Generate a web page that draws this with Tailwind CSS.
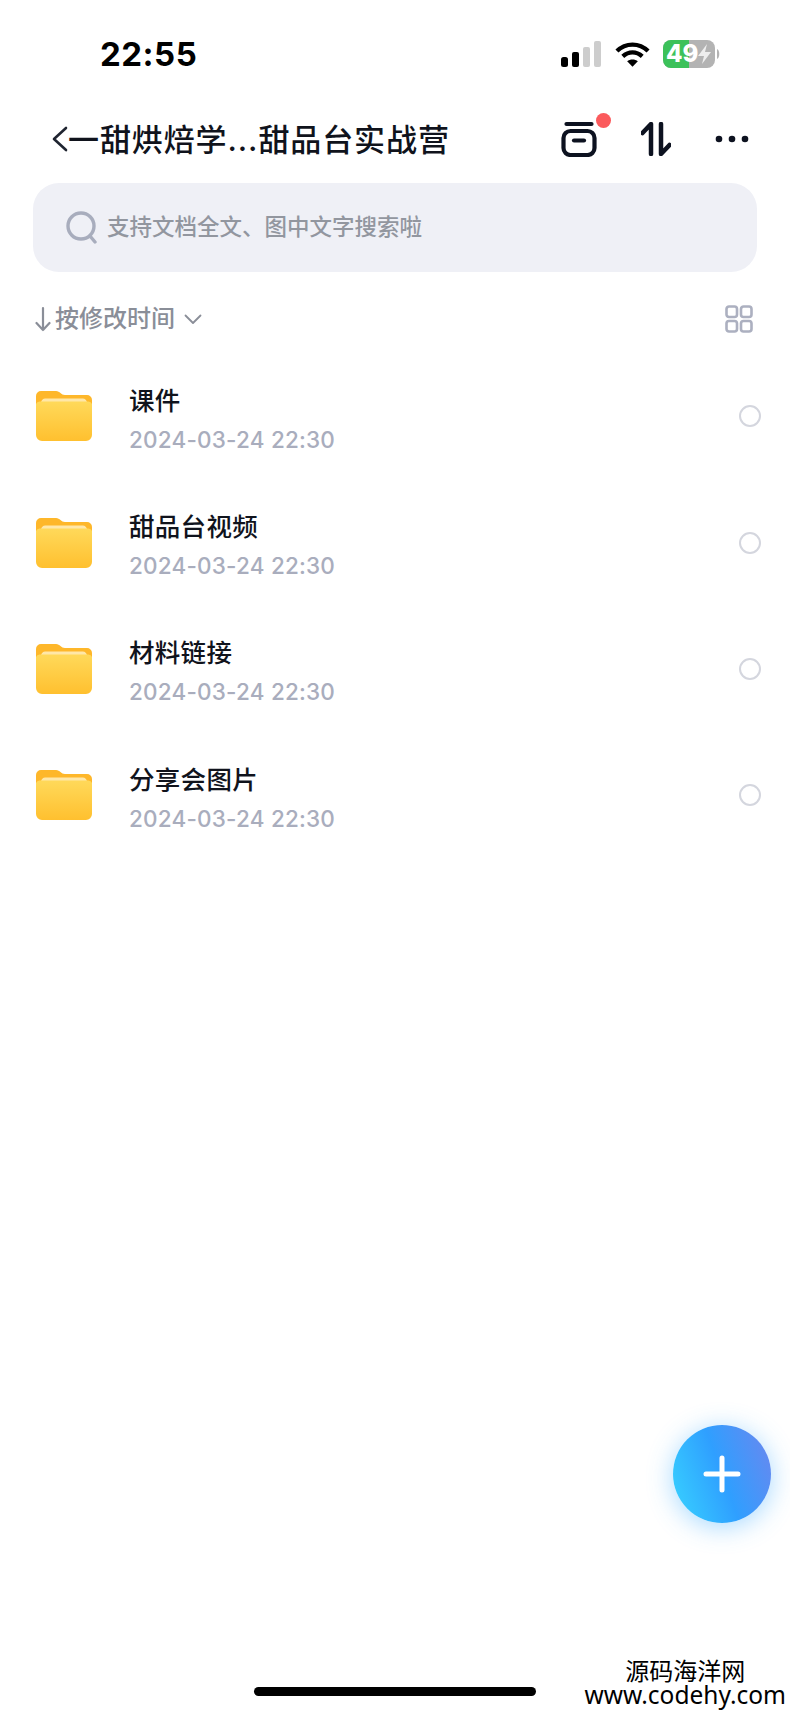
<!doctype html>
<html lang="zh"><head><meta charset="utf-8">
<script src="https://cdn.jsdelivr.net/npm/@tailwindcss/browser@4"></script>
</head>
<body class="bg-white">
<div class="relative w-[790px] h-[1712px] overflow-hidden bg-white font-['Inter','Noto_Sans_CJK_SC',sans-serif]">
  <!-- status bar -->
  <div class="flex items-center justify-between h-[108px] pl-[100px] pr-[69px]">
    <span class="text-[33px] leading-none font-bold text-black tracking-[0.5px]">22:55</span>
    <div class="flex items-center">
      <svg width="40" height="26" viewBox="0 0 40 26"><rect x="0" y="16" width="7" height="10" rx="2.5" fill="#000"/><rect x="11" y="11" width="7" height="15" rx="2" fill="#000"/><rect x="22" y="6" width="7" height="20" rx="2" fill="#cdcdcd"/><rect x="33" y="0" width="7" height="26" rx="2" fill="#cdcdcd"/></svg>
      <svg class="ml-[14px] mr-[13px]" width="35" height="26" viewBox="0 0 36 26" fill="none" stroke="#000" stroke-width="4.4"><path d="M2 10 C11 1 25 1 34 10"/><path d="M8 15.5 C14 10 22 10 28 15.5"/><path d="M18 26 L12.5 20.5 C15.5 18 20.5 18 23.5 20.5 Z" fill="#000" stroke="none"/></svg>
      <div class="relative flex items-center">
        <svg width="58" height="28" viewBox="0 0 58 28"><rect x="0" y="0" width="52" height="28" rx="8" fill="#b3b3b3"/><path d="M8 0 H26 V28 H8 A8 8 0 0 1 0 20 V8 A8 8 0 0 1 8 0 Z" fill="#3cc15a"/><path d="M54 9 C57 10 57 18 54 19 Z" fill="#b3b3b3"/><path d="M44 4 L35 16 H41 L39 24 L48 12 H42 Z" fill="#eeeeee"/></svg>
        <span class="absolute left-[3px] top-[1px] text-[24px] leading-[26px] font-extrabold text-white">49</span>
      </div>
    </div>
  </div>
  <!-- title bar -->
  <div class="flex items-center h-[60px] mt-[1px] pl-[51px] pr-[41px]">
    <svg class="shrink-0" width="17" height="26" viewBox="0 0 17 26" fill="none" stroke="#1f2430" stroke-width="2.6" stroke-linecap="round" stroke-linejoin="round"><path d="M15 2 L3 13 L15 24"/></svg>
    <span class="text-[31px] leading-none font-medium text-[#10131c] whitespace-nowrap tracking-[0.9px]">一甜烘焙学...甜品台实战营</span>
    <div class="ml-auto flex items-center">
      <div class="relative w-[36px] h-[36px]">
        <svg width="36" height="36" viewBox="0 0 36 36" fill="none" stroke="#0d1220" stroke-width="4.2" stroke-linecap="round"><path d="M5.500 3 H30.500"/><rect x="2.500" y="10" width="31" height="24" rx="7"/><path d="M13 19.500 H23"/></svg>
        <span class="absolute left-[35px] top-[-8px] w-[15px] h-[15px] rounded-full bg-[#fb5a5c]"></span>
      </div>
      <svg class="ml-[44px]" width="30" height="34" viewBox="0 0 30 34" fill="none" stroke="#0d1220" stroke-width="4.5" stroke-linecap="round" stroke-linejoin="round"><path d="M1.500 11 L10 2 V32"/><path d="M20 2 V32 L28.500 23"/></svg>
      <svg class="ml-[44px]" width="34" height="10" viewBox="0 0 34 10" fill="#0d1220"><circle cx="4" cy="5" r="3.300"/><circle cx="17" cy="5" r="3.300"/><circle cx="30" cy="5" r="3.300"/></svg>
    </div>
  </div>
  <!-- search -->
  <div class="flex items-center gap-[9px] ml-[33px] mt-[14px] h-[89px] w-[724px] rounded-[26px] bg-[#eff0f6] pl-[33px]">
    <svg width="32" height="33" viewBox="0 0 32 33" fill="none" stroke="#a8adbd" stroke-width="3.400"><circle cx="15" cy="15" r="13"/><path d="M24 25 L29 31" stroke-linecap="round"/></svg>
    <span class="text-[22.500px] leading-none font-medium text-[#92969f]">支持文档全文、图中文字搜索啦</span>
  </div>
  <!-- sort row -->
  <div class="flex items-center justify-between h-[46px] mt-[24px] pl-[35px] pr-[37px]">
    <div class="flex items-center text-[#8a8e98]">
      <svg width="16" height="26" viewBox="0 0 16 26" fill="none" stroke="#8a8e98" stroke-width="2.200" stroke-linecap="round" stroke-linejoin="round"><path d="M8 2 V24 M1.500 17 L8 24 L14.500 17"/></svg>
      <span class="ml-[4px] text-[24px] leading-none font-medium">按修改时间</span>
      <svg class="ml-[9px]" width="18" height="11" viewBox="0 0 18 11" fill="none" stroke="#8a8e98" stroke-width="1.800" stroke-linecap="round" stroke-linejoin="round"><path d="M1.500 1.500 L9 9 L16.500 1.500"/></svg>
    </div>
    <svg width="28" height="28" viewBox="0 0 28 28" fill="none" stroke="#acb0c0" stroke-width="2.600"><rect x="1.500" y="1.500" width="10.500" height="10.500" rx="2.500"/><rect x="16" y="1.500" width="10.500" height="10.500" rx="2.500"/><rect x="1.500" y="16" width="10.500" height="10.500" rx="2.500"/><rect x="16" y="16" width="10.500" height="10.500" rx="2.500"/></svg>
  </div>
  <!-- list -->
  <svg width="0" height="0" class="absolute"><defs>
    <linearGradient id="fg" x1="0" y1="0" x2="0" y2="1"><stop offset="0" stop-color="#ffd95a"/><stop offset="1" stop-color="#ffc02f"/></linearGradient>
    <symbol id="folder" viewBox="0 0 56 50">
      <path d="M5 0 H20 C24 0 25 4 29 4 H51 A5 5 0 0 1 56 9 V20 H0 V5 A5 5 0 0 1 5 0 Z" fill="#feb72a"/>
      <path d="M9 7.500 H47 C49 7.500 50 9 51 11 H5 C6 9 7 7.500 9 7.500 Z" fill="#ffe7a8"/>
      <path d="M4 10.500 H52 A4 4 0 0 1 56 13 V44 A6 6 0 0 1 50 50 H6 A6 6 0 0 1 0 44 V13 A4 4 0 0 1 4 10.500 Z" fill="url(#fg)"/>
    </symbol>
  </defs></svg>
  <div class="mt-[11px] flex flex-col">
    <div class="flex items-center h-[126.400px] pl-[36px] pr-[29px]">
      <svg width="56" height="50"><use href="#folder"/></svg>
      <div class="ml-[37px] flex flex-col gap-[14px] pt-[7px]">
        <span class="text-[25.500px] leading-[26px] font-medium text-[#10131c] tracking-[0.3px]">课件</span>
        <span class="text-[22.500px] leading-[24px] font-medium text-[#a9adbd] tracking-[0.2px]">2024-03-24 22:30</span>
      </div>
      <span class="ml-auto w-[22px] h-[22px] rounded-full border-2 border-[#d4d6de]"></span>
    </div>
    <div class="flex items-center h-[126.400px] pl-[36px] pr-[29px]">
      <svg width="56" height="50"><use href="#folder"/></svg>
      <div class="ml-[37px] flex flex-col gap-[14px] pt-[7px]">
        <span class="text-[25.500px] leading-[26px] font-medium text-[#10131c] tracking-[0.3px]">甜品台视频</span>
        <span class="text-[22.500px] leading-[24px] font-medium text-[#a9adbd] tracking-[0.2px]">2024-03-24 22:30</span>
      </div>
      <span class="ml-auto w-[22px] h-[22px] rounded-full border-2 border-[#d4d6de]"></span>
    </div>
    <div class="flex items-center h-[126.400px] pl-[36px] pr-[29px]">
      <svg width="56" height="50"><use href="#folder"/></svg>
      <div class="ml-[37px] flex flex-col gap-[14px] pt-[7px]">
        <span class="text-[25.500px] leading-[26px] font-medium text-[#10131c] tracking-[0.3px]">材料链接</span>
        <span class="text-[22.500px] leading-[24px] font-medium text-[#a9adbd] tracking-[0.2px]">2024-03-24 22:30</span>
      </div>
      <span class="ml-auto w-[22px] h-[22px] rounded-full border-2 border-[#d4d6de]"></span>
    </div>
    <div class="flex items-center h-[126.400px] pl-[36px] pr-[29px]">
      <svg width="56" height="50"><use href="#folder"/></svg>
      <div class="ml-[37px] flex flex-col gap-[14px] pt-[7px]">
        <span class="text-[25.500px] leading-[26px] font-medium text-[#10131c] tracking-[0.3px]">分享会图片</span>
        <span class="text-[22.500px] leading-[24px] font-medium text-[#a9adbd] tracking-[0.2px]">2024-03-24 22:30</span>
      </div>
      <span class="ml-auto w-[22px] h-[22px] rounded-full border-2 border-[#d4d6de]"></span>
    </div>
  </div>
  <!-- FAB -->
  <div class="absolute left-[673px] top-[1425px] w-[98px] h-[98px] rounded-full bg-linear-[70deg] from-[#38d4ff] via-[#2f9fff] to-[#6d86ee] shadow-[0_4px_26px_rgba(60,170,255,0.45)] flex items-center justify-center">
    <svg width="38" height="38" viewBox="0 0 38 38" fill="none" stroke="#fff" stroke-width="5" stroke-linecap="round"><path d="M19 3 V35 M3 19 H35"/></svg>
  </div>
  <!-- home indicator -->
  <div class="absolute left-[254px] top-[1687px] w-[282px] h-[9px] rounded-full bg-black"></div>
  <!-- watermark -->
  <div class="absolute right-[4px] top-[1657px] flex flex-col items-center text-black">
    <span class="text-[24px] leading-[25px] font-['Noto_Sans_CJK_SC',sans-serif]">源码海洋网</span>
    <span class="text-[24.500px] leading-[25px] font-['Noto_Sans',sans-serif]">www.codehy.com</span>
  </div>
</div>
</body></html>
